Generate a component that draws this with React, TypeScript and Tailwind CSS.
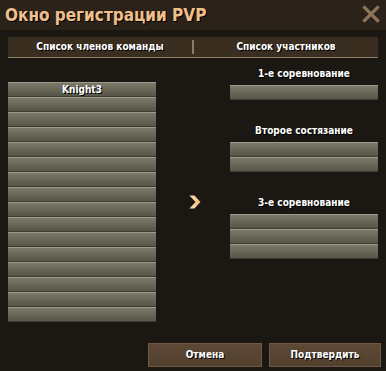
import React from "react";

const font = { fontFamily: '"DejaVu Sans", Verdana, sans-serif' };
const small = { fontFamily: '"DejaVu Sans Condensed", "DejaVu Sans", Verdana, sans-serif' };

function Row({ text }: { text?: string }) {
  return (
    <div
      className="h-[15px] flex items-center justify-center border-t border-t-[#9c998a] border-b border-b-[#3e3d33] bg-gradient-to-b from-[#7b7a6a] to-[#565547] text-[10px] font-bold text-white leading-none [text-shadow:1px_1px_0_#000]"
      style={small}
    >
      {text}
    </div>
  );
}

function Group({ label, n }: { label: string; n: number }) {
  return (
    <div className="flex flex-col">
      <div
        className="h-[14px] flex items-center justify-center text-[10px] font-bold text-white leading-none [text-shadow:1px_1px_0_#000] mb-[4px]"
        style={small}
      >
        {label}
      </div>
      <div className="flex flex-col">
        {Array.from({ length: n }).map((_, i) => (
          <Row key={i} />
        ))}
      </div>
    </div>
  );
}

export default function App() {
  return (
    <div className="w-[386px] h-[371px] bg-[#1b1713] flex flex-col overflow-hidden" style={font}>
      <div className="h-[30px] bg-[#2b2319] flex items-center justify-between pl-[5px] pr-[6px] shrink-0">
        <span className="text-[17px] font-bold text-[#f0bf8c] leading-none [text-shadow:1px_1px_0_#000]" style={small}>
          Окно регистрации PVP
        </span>
        <svg width="18" height="18" viewBox="0 0 18 18" className="mb-[2px]">
          <path d="M2.5 2.5 L15.5 15.5 M15.5 2.5 L2.5 15.5" stroke="#8c735a" strokeWidth="3.2" strokeLinecap="square" />
        </svg>
      </div>
      <div className="mt-[7px] mx-[8px] h-[21px] bg-[#3a2e21] border-b border-b-[#8a7b65] flex items-center shrink-0" style={small}>
        <div className="flex-1 flex items-center justify-center text-[10px] font-bold text-white leading-none [text-shadow:1px_1px_0_#000]">
          Список членов команды
        </div>
        <div className="w-[2px] h-[14px] bg-[#8a7b65]" />
        <div className="flex-1 flex items-center justify-center text-[10px] font-bold text-white leading-none [text-shadow:1px_1px_0_#000]">
          Список участников
        </div>
      </div>
      <div className="h-[285px] flex shrink-0">
        <div className="ml-[8px] w-[148px] pt-[24px] flex flex-col">
          <Row text="Knight3" />
          {Array.from({ length: 15 }).map((_, i) => (
            <Row key={i} />
          ))}
        </div>
        <div className="w-[74px] flex justify-center pl-[4px] pt-[137px]">
          <svg width="12" height="14" viewBox="0 0 12 14">
            <defs>
              <linearGradient id="ag" x1="0" y1="0" x2="1" y2="0">
                <stop offset="0" stopColor="#ffe3bd" />
                <stop offset="1" stopColor="#f0b57a" />
              </linearGradient>
            </defs>
            <path d="M0.5 0.5 H5.5 L11.5 7 L5.5 13.5 H0.5 L6.5 7 Z" fill="url(#ag)" />
          </svg>
        </div>
        <div className="w-[148px] pt-[9px] flex flex-col gap-[24px]">
          <Group label="1-е соревнование" n={1} />
          <Group label="Второе состязание" n={2} />
          <Group label="3-е соревнование" n={3} />
        </div>
      </div>
      <div className="flex justify-end gap-[7px] pr-[5px] shrink-0" style={small}>
        <button className="w-[114px] h-[24px] bg-gradient-to-b from-[#5e4836] to-[#52402f] border border-[#6f5844] text-[10px] font-bold text-white leading-none [text-shadow:1px_1px_0_#000]">
          Отмена
        </button>
        <button className="w-[112px] h-[24px] bg-gradient-to-b from-[#5e4836] to-[#52402f] border border-[#6f5844] text-[10px] font-bold text-white leading-none [text-shadow:1px_1px_0_#000]">
          Подтвердить
        </button>
      </div>
    </div>
  );
}
